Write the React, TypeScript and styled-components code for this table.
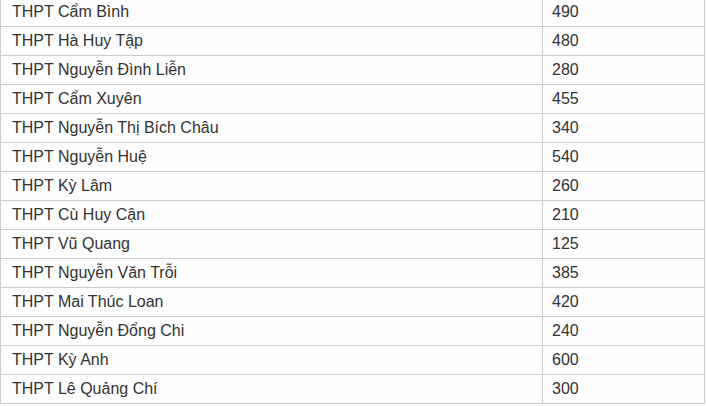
import styled, { createGlobalStyle } from 'styled-components';

const rows: [string, number][] = [
  ['THPT Cẩm Bình', 490],
  ['THPT Hà Huy Tập', 480],
  ['THPT Nguyễn Đình Liễn', 280],
  ['THPT Cẩm Xuyên', 455],
  ['THPT Nguyễn Thị Bích Châu', 340],
  ['THPT Nguyễn Huệ', 540],
  ['THPT Kỳ Lâm', 260],
  ['THPT Cù Huy Cận', 210],
  ['THPT Vũ Quang', 125],
  ['THPT Nguyễn Văn Trỗi', 385],
  ['THPT Mai Thúc Loan', 420],
  ['THPT Nguyễn Đổng Chi', 240],
  ['THPT Kỳ Anh', 600],
  ['THPT Lê Quảng Chí', 300],
];

const GlobalStyle = createGlobalStyle`
  html, body {
    margin: 0;
    padding: 0;
    background: #fdfdfd;
  }
`;

export default function App() {
  return (
    <>
      <GlobalStyle />
      <Table>
        <tbody>
          {rows.map(([name, score]) => (
            <Row key={name}>
              <NameCell>{name}</NameCell>
              <ScoreCell>{score}</ScoreCell>
            </Row>
          ))}
        </tbody>
      </Table>
    </>
  );
}

const Table = styled.table`
  margin-top: -3px;
  width: 705px;
  border-collapse: collapse;
  table-layout: fixed;
  font-family: Arial, 'Liberation Sans', sans-serif;
  font-size: 16px;
  color: #333;
  background: #fdfdfd;
`;

const Row = styled.tr`
  height: 29px;
`;

const Cell = styled.td`
  border: 1px solid #cccccc;
  padding: 0 10px 0 11px;
  height: 28px;
  line-height: 18px;
  white-space: nowrap;
`;

const NameCell = styled(Cell)`
  width: 520px;
`;

const ScoreCell = styled(Cell)`
  padding-left: 9px;
`;
